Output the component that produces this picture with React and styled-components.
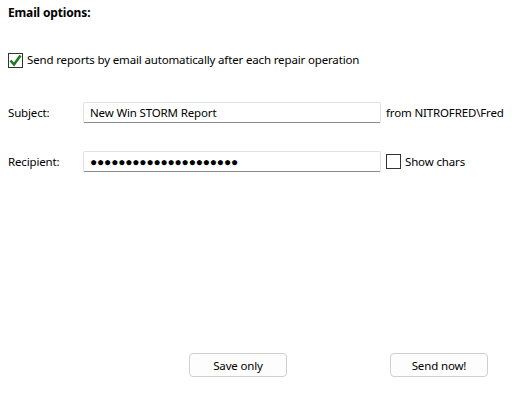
import React, { useState } from 'react';
import styled, { createGlobalStyle } from 'styled-components';

const GlobalStyle = createGlobalStyle`
  html, body, #root {
    margin: 0;
    height: 100%;
    background: #ffffff;
  }
  body {
    font-family: "Noto Sans", "Open Sans", sans-serif;
    font-size: 11.5px;
    letter-spacing: -0.15px;
    color: #000;
  }
`;

const Page = styled.div`
  height: 393px;
  box-sizing: border-box;
  padding: 4px 0 16px 8px;
  display: flex;
  flex-direction: column;
`;

const Title = styled.div`
  font-weight: bold;
  font-size: 12px;
  line-height: 17px;
`;

const CheckRow = styled.label`
  display: flex;
  align-items: center;
  gap: 4px;
  margin-top: ${(p) => p.$top || 0}px;
  line-height: 16px;
`;

const Box = styled.span`
  width: 13px;
  height: 13px;
  border: 1px solid #333;
  box-sizing: content-box;
  display: flex;
  align-items: center;
  justify-content: center;
  background: #fff;
  flex-shrink: 0;
`;

const Row = styled.div`
  display: flex;
  align-items: center;
  margin-top: ${(p) => p.$top}px;
`;

const Label = styled.div`
  width: 75px;
`;

const Field = styled.div`
  width: 284px;
  height: 19px;
  border: 1px solid #e2e2e2;
  border-bottom-color: #8a8a8a;
  border-radius: 2px;
  padding: 0 6px;
  display: flex;
  align-items: center;
  margin-right: 5px;
  box-sizing: content-box;
  font-size: ${(p) => (p.$dots ? '12px' : 'inherit')};
  letter-spacing: ${(p) => (p.$dots ? '-0.2px' : 'inherit')};
`;

const Side = styled.div`
  white-space: nowrap;
`;

const Buttons = styled.div`
  margin-top: auto;
  display: flex;
  padding-left: 181px;
  gap: 103px;
`;

const Button = styled.button`
  width: 98px;
  height: 24px;
  border: 1px solid #d0d0d0;
  border-radius: 4px;
  background: #fdfdfd;
  font-family: inherit;
  font-size: 11.5px;
  letter-spacing: inherit;
  color: #000;
  padding: 0;
`;

function Check({ checked }) {
  return (
    <Box>
      {checked && (
        <svg width="13" height="13" viewBox="0 0 13 13">
          <path d="M1.5 6.5 L5 10.5 L11.5 1.5" stroke="#1e7a1e" strokeWidth="2.6" fill="none" />
        </svg>
      )}
    </Box>
  );
}

export default function App() {
  const [auto] = useState(true);
  return (
    <Page>
      <GlobalStyle />
      <Title>Email options:</Title>
      <CheckRow $top={31}>
        <Check checked={auto} />
        Send reports by email automatically after each repair operation
      </CheckRow>
      <Row $top={34}>
        <Label>Subject:</Label>
        <Field>New Win STORM Report</Field>
        <Side>from NITROFRED\Fred</Side>
      </Row>
      <Row $top={28}>
        <Label>Recipient:</Label>
        <Field $dots>{'\u25CF'.repeat(21)}</Field>
        <CheckRow>
          <Check />
          Show chars
        </CheckRow>
      </Row>
      <Buttons>
        <Button>Save only</Button>
        <Button>Send now!</Button>
      </Buttons>
    </Page>
  );
}
